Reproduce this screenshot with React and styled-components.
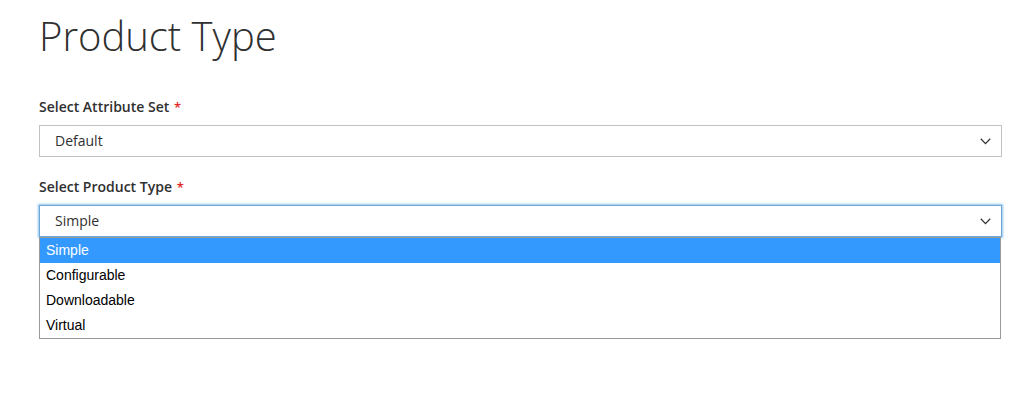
import React from "react";
import styled, { createGlobalStyle } from "styled-components";

const GlobalStyle = createGlobalStyle`
    body {
        margin: 0;
        background: #fff;
        font-family: "Open Sans", "Liberation Sans", sans-serif;
        color: #303030;
    }
`;

const types = ["Simple", "Configurable", "Downloadable", "Virtual"];

const Chevron = () => (
    <svg width="11" height="7" viewBox="0 0 11 7" fill="none">
        <path d="M0.8 0.8 L5.5 5.6 L10.2 0.8" stroke="#333" strokeWidth="1.3" />
    </svg>
);

const Field = ({ label, value, focused, children }) => (
    <FieldStyled>
        <Label>
            {label} <Required>*</Required>
        </Label>
        <SelectWrap>
            <SelectBox focused={focused}>
                <span>{value}</span>
                <Chevron />
            </SelectBox>
            {children}
        </SelectWrap>
    </FieldStyled>
);

const App = () => {
    return (
        <>
            <GlobalStyle />
            <Page>
                <Title>Product Type</Title>
                <Field label="Select Attribute Set" value="Default" />
                <Field label="Select Product Type" value="Simple" focused>
                    {/* open dropdown list, sits over the content below */}
                    <Options>
                        {types.map((t, i) => (
                            <Option key={t} active={i === 0}>
                                {t}
                            </Option>
                        ))}
                    </Options>
                </Field>
            </Page>
        </>
    );
};

export default App;

const Page = styled.div`
    box-sizing: border-box;
    width: 1002px;
    min-height: 100vh;
    padding: 12px 0 0 39px;
`;

const Title = styled.h1`
    margin: 0 0 37px;
    font-size: 40px;
    line-height: 48px;
    font-weight: 300;
    color: #303030;
`;

const FieldStyled = styled.div`
    display: flex;
    flex-direction: column;
    gap: 8px;
    margin-bottom: 20px;
`;

const Label = styled.label`
    font-size: 14px;
    line-height: 20px;
    font-weight: 600;
    color: #303030;
`;

const Required = styled.span`
    margin-left: 1px;
    color: #e22626;
    font-size: 13px;
`;

const SelectWrap = styled.div`
    position: relative;
`;

const SelectBox = styled.div`
    box-sizing: border-box;
    height: 32px;
    display: flex;
    align-items: center;
    justify-content: space-between;
    padding: 0 10px 2px 15px;
    border: 1px solid ${(props) => (props.focused ? "#6fa6d8" : "#c2c2c2")};
    box-shadow: ${(props) =>
        props.focused ? "0 0 2px 1px rgba(0, 123, 219, 0.45)" : "none"};
    background: #fff;
    font-size: 14px;
    color: #303030;

    svg {
        margin-top: 2px;
    }
`;

const Options = styled.ul`
    position: absolute;
    top: 100%;
    left: 0;
    right: 1px;
    margin: 0;
    padding: 0;
    list-style: none;
    border: 1px solid #9a9a9a;
    background: #fff;
    z-index: 2;
`;

const Option = styled.li`
    height: 25px;
    line-height: 25px;
    padding-left: 6px;
    font-family: "Liberation Sans", Arial, sans-serif;
    font-size: 14px;
    color: ${(props) => (props.active ? "#fff" : "#000")};
    background: ${(props) => (props.active ? "#3399ff" : "transparent")};
`;
